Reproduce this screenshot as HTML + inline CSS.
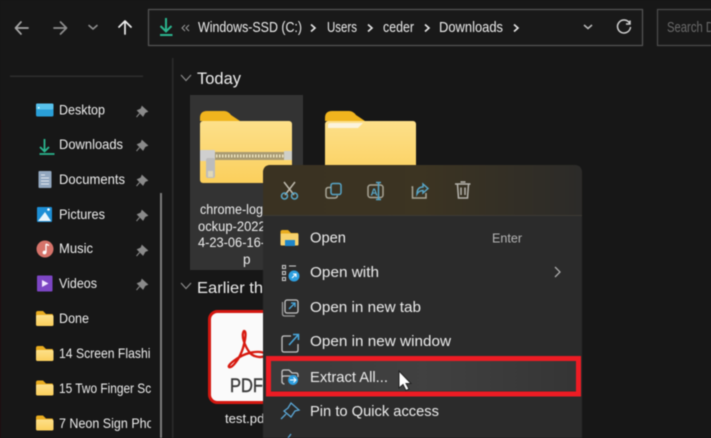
<!DOCTYPE html>
<html><head><meta charset="utf-8"><style>
html,body{margin:0;padding:0;background:#171717;width:711px;height:438px;overflow:hidden}
svg{display:block;filter:blur(.5px)}
text{font-family:"Liberation Sans",sans-serif;fill:#ececec;font-size:14px}
</style></head><body>
<svg width="711" height="438" viewBox="0 0 711 438" xmlns="http://www.w3.org/2000/svg">
<defs>
<clipPath id="sb"><rect x="0" y="0" width="151" height="438"/></clipPath>
<linearGradient id="fy" x1="0" y1="0" x2="0" y2="1"><stop offset="0" stop-color="#fde08a"/><stop offset="1" stop-color="#fbcf5c"/></linearGradient>
<linearGradient id="tb" x1="0" y1="0" x2="1" y2="0"><stop offset="0" stop-color="#3a3222"/><stop offset=".5" stop-color="#3c3422"/><stop offset="1" stop-color="#2c2b29"/></linearGradient>
<linearGradient id="ex" x1="0" y1="0" x2="1" y2="0"><stop offset="0" stop-color="#3a3a3a"/><stop offset=".5" stop-color="#414141"/><stop offset="1" stop-color="#353535"/></linearGradient>
<g id="pin"><path d="M4 0.5 L9.5 5.5 L7 6.5 L5 10 L-.5 4.5 L3 3 Z M1.5 7.5 L-1.5 11" fill="#8a8a8a" stroke="#8a8a8a" stroke-width="1"/></g>
<g id="fold"><path d="M0 2 Q0 0 2 0 H7 L10 3 H16 Q17 3 17 4 V8 H0Z" fill="#e9ac1f"/><rect x="0" y="4" width="17.500" height="11" rx="1.500" fill="url(#fy)"/></g>
</defs>
<rect width="711" height="438" fill="#171717"/>
<rect x="0" y="120" width="1" height="318" fill="#210d10"/>

<!-- nav -->
<g fill="none" stroke-linecap="round" stroke-linejoin="round">
<path d="M28 28H16M21 22L15.500 28L21 34" stroke="#a5a5a5" stroke-width="1.700"/>
<path d="M54 28H66M60.500 22L66.500 28L60.500 34" stroke="#8e8e8e" stroke-width="1.700"/>
<path d="M89 25.500L93 29L97 25.500" stroke="#8e8e8e" stroke-width="1.600"/>
<path d="M125 34V21M119 27L125 21L131 27" stroke="#ededed" stroke-width="1.700"/>
</g>
<rect x="148.500" y="9.500" width="494" height="36" fill="#191919" stroke="#555" stroke-width="1.200"/>
<rect x="657.500" y="9.500" width="70" height="36" fill="#191919" stroke="#4d4d4d" stroke-width="1.200"/>
<path d="M166 18V31M160.500 26L166 31.500L171.500 26M160 35H172.500" fill="none" stroke="#2bb58e" stroke-width="2"/>
<path d="M185 25L182 28L185 31M189 25L186 28L189 31" fill="none" stroke="#999" stroke-width="1"/>
<g>
<text x="198" y="32" style="font-size:15px" textLength="104" lengthAdjust="spacingAndGlyphs">Windows-SSD (C:)</text>
<text x="327" y="32" style="font-size:15px" textLength="30" lengthAdjust="spacingAndGlyphs">Users</text>
<text x="383" y="32" style="font-size:15px" textLength="31" lengthAdjust="spacingAndGlyphs">ceder</text>
<text x="439" y="32" style="font-size:15px" textLength="64" lengthAdjust="spacingAndGlyphs">Downloads</text>
<text x="667" y="32" style="font-size:15px;fill:#6a6a6a" textLength="47" lengthAdjust="spacingAndGlyphs">Search D</text>
</g>
<g fill="none" stroke="#e6e6e6" stroke-width="1.600">
<path d="M311 24.500L315 28L311 31.500M368 24.500L372 28L368 31.500M425 24.500L429 28L425 31.500M514 24.500L518 28L514 31.500"/>
</g>
<path d="M584 25L588 28.500L592 25" fill="none" stroke="#bbb" stroke-width="1.500"/>
<path d="M629.500 23A6.500 6.500 0 1 0 630.500 27M630 20.500V24H626" fill="none" stroke="#d0d0d0" stroke-width="1.500"/>

<!-- sidebar -->
<rect x="10" y="75.500" width="133" height="1.500" fill="#2e2e2e"/>
<rect x="172" y="58" width="1.500" height="380" fill="#2b2b2b"/>
<rect x="160" y="193" width="2" height="245" fill="#7a7a7a"/>

<rect x="36" y="103.500" width="17.500" height="13" rx="1.500" fill="#2a9fd8"/>
<rect x="36" y="103.500" width="17.500" height="6" rx="1.500" fill="#58c2ec"/>
<rect x="38" y="107" width="1.500" height="1.500" fill="#dff"/>
<path d="M41 140V152M36.500 148L41 152.500L45.500 148M36 155H51" transform="translate(3.500,-1)" fill="none" stroke="#2bb58e" stroke-width="1.800"/>
<rect x="38.500" y="171" width="13" height="17" rx="1" fill="#93a8c0"/>
<path d="M41 175H45M41 178H49M41 181H49M41 184H49" stroke="#dfe6ee" stroke-width="1"/>
<rect x="37" y="207" width="15" height="15" rx="1" fill="#1d8fd6"/>
<path d="M38 221L45 212L51 221Z" fill="#e8f5fc"/><circle cx="48.500" cy="209.500" r="1.300" fill="#fff"/>
<circle cx="45" cy="249" r="8.500" fill="#d6736a"/>
<path d="M46 244V252.500" stroke="#fff" stroke-width="1.300"/><circle cx="44.500" cy="252.500" r="1.900" fill="#fff"/><path d="M46 244L49 245.500" stroke="#fff" stroke-width="1.300"/>
<rect x="37" y="275.500" width="15.500" height="16" rx="1" fill="#7d46c4"/>
<path d="M42 280V287L48.500 283.500Z" fill="#f2e8ff"/>
<use href="#fold" x="36" y="311"/><use href="#fold" x="36" y="346"/><use href="#fold" x="36" y="380.500"/><use href="#fold" x="36" y="415.500"/>
<use href="#pin" x="138" y="106"/><use href="#pin" x="138" y="140"/><use href="#pin" x="138" y="175"/><use href="#pin" x="138" y="210"/><use href="#pin" x="138" y="245"/><use href="#pin" x="138" y="279"/>
<g clip-path="url(#sb)">
<text x="59" y="114.500" textLength="46" lengthAdjust="spacingAndGlyphs">Desktop</text>
<text x="59" y="149" textLength="64" lengthAdjust="spacingAndGlyphs">Downloads</text>
<text x="59" y="184" textLength="66" lengthAdjust="spacingAndGlyphs">Documents</text>
<text x="59" y="219" textLength="46" lengthAdjust="spacingAndGlyphs">Pictures</text>
<text x="59" y="253" textLength="34" lengthAdjust="spacingAndGlyphs">Music</text>
<text x="59" y="288" textLength="38" lengthAdjust="spacingAndGlyphs">Videos</text>
<text x="59" y="323" textLength="30" lengthAdjust="spacingAndGlyphs">Done</text>
<text x="59" y="358" textLength="105" lengthAdjust="spacingAndGlyphs">14 Screen Flashing</text>
<text x="59" y="393" textLength="108" lengthAdjust="spacingAndGlyphs">15 Two Finger Scroll</text>
<text x="59" y="428" textLength="105" lengthAdjust="spacingAndGlyphs">7 Neon Sign Photo</text>
</g>

<!-- main -->
<path d="M181 75L186 80.500L191 75" fill="none" stroke="#8a8a8a" stroke-width="1.200"/>
<text x="197" y="84" style="font-size:17px" textLength="44" lengthAdjust="spacingAndGlyphs">Today</text>
<rect x="190" y="95" width="113" height="175" fill="#333"/>
<!-- zip folder -->
<path d="M200 118Q200 111 207 111H224Q228 111 231 115L240 121H200Z" fill="#f0b41e"/>
<rect x="200" y="121" width="92" height="62" rx="3" fill="url(#fy)"/>
<rect x="214" y="152" width="72" height="8" fill="#a89a72"/>
<path d="M216 156H286" stroke="#ece3c0" stroke-width="3" stroke-dasharray="1.500 1.500"/>
<rect x="200" y="150" width="15" height="11" rx="1" fill="#cfcfcf"/>
<rect x="284" y="151" width="8" height="9" fill="#cfcfc8"/>
<rect x="206" y="158" width="9" height="20" rx="2" fill="#bcbcbc"/>
<rect x="208" y="171" width="5" height="6" fill="#e0d8b8"/>
<!-- plain folder -->
<path d="M325 118Q325 111 332 111H349Q353 111 356 115L365 121H325Z" fill="#f0b41e"/>
<rect x="325" y="121" width="91" height="60" rx="3" fill="url(#fy)"/>
<path d="M328 125Q328 123 331 123H363L358 128H328Z" fill="#fbf3dc"/>
<g>
<text x="200" y="214" style="font-size:13.500px" textLength="70" lengthAdjust="spacingAndGlyphs">chrome-logo</text>
<text x="198" y="231" style="font-size:13.500px" textLength="72" lengthAdjust="spacingAndGlyphs">ockup-2022-</text>
<text x="198" y="247" style="font-size:13.500px" textLength="67" lengthAdjust="spacingAndGlyphs">4-23-06-16-</text>
<text x="243" y="264" style="font-size:13.500px">p</text>
</g>
<path d="M181 283L186 288.500L191 283" fill="none" stroke="#8a8a8a" stroke-width="1.200"/>
<text x="197" y="293" style="font-size:16px" textLength="78" lengthAdjust="spacingAndGlyphs">Earlier this</text>
<!-- pdf -->
<rect x="209.500" y="311.500" width="72" height="91" rx="8" fill="#fafafa" stroke="#d31710" stroke-width="3"/>
<path d="M244 331C241 335 244 345 250 353C255 358 264 358 265 355C265 351 254 351 246 354C238 357 227 365 229 367C232 369 240 358 243 348C245 341 247 331 244 331Z" fill="none" stroke="#d71a10" stroke-width="2.300"/>
<text x="230" y="392" style="font-size:19px;fill:#3a3a3a;stroke:#3a3a3a;stroke-width:.4" textLength="33" lengthAdjust="spacingAndGlyphs">PDF</text>
<text x="225" y="423" style="font-size:13px" textLength="43" lengthAdjust="spacingAndGlyphs">test.pdf</text>

<!-- context menu -->
<path d="M263 448V173Q263 165 271 165H574Q582 165 582 173V448Z" fill="#2b2b2b"/>
<path d="M263 215V173Q263 165 271 165H574Q582 165 582 173V215Z" fill="url(#tb)"/>
<rect x="263" y="215" width="319" height="1" fill="#3d3a34"/>
<!-- toolbar icons -->
<g fill="none" stroke-width="1.500">
<path d="M284 182L294 195M295 182L285 195" stroke="#bdb9ad"/>
<circle cx="284.500" cy="196" r="3" stroke="#57a5c7"/><circle cx="294.500" cy="196" r="3" stroke="#57a5c7"/>
<rect x="331" y="183.500" width="10" height="11" rx="2" stroke="#57a5c7"/>
<path d="M331 187.500H328.500Q326 187.500 326 190V195Q326 198 328.500 198H335Q337 198 337.500 195.500" stroke="#a8a596"/>
<rect x="368" y="185" width="15" height="12.500" rx="2.500" stroke="#a8a596"/>
<path d="M378.500 182.500V199.500M376 182.500H381M376 199.500H381" stroke="#57a5c7"/>
<path d="M411.500 187H412.500V198H426V193" stroke="#a8a596"/>
<path d="M417 194Q417 187 423 187V184L428 188.500L423 193V190.500Q419 190.500 417 194Z" stroke="#57a5c7"/>
<path d="M455.500 184H471M458 184.500L459 198H468L469 184.500M461 182H466M461.500 187.500V195M465.500 187.500V195" stroke="#b5b3ac" transform="translate(-.5,0)"/>
</g>
<text x="370.500" y="195.500" style="font-size:10px;fill:#57a5c7;font-weight:700">A</text>
<!-- menu text -->
<g>
<text x="310" y="242.500" style="font-size:15px" textLength="36" lengthAdjust="spacingAndGlyphs">Open</text>
<text x="492" y="242.500" textLength="30" lengthAdjust="spacingAndGlyphs" style="font-size:13px;fill:#b5b5b5">Enter</text>
<text x="310" y="277" style="font-size:15px" textLength="69" lengthAdjust="spacingAndGlyphs">Open with</text>
<text x="310" y="312" style="font-size:15px" textLength="111" lengthAdjust="spacingAndGlyphs">Open in new tab</text>
<text x="310" y="346" style="font-size:15px" textLength="141" lengthAdjust="spacingAndGlyphs">Open in new window</text>
<text x="310" y="416" style="font-size:15px" textLength="129" lengthAdjust="spacingAndGlyphs">Pin to Quick access</text>
</g>
<path d="M555 267L560 272L555 277" fill="none" stroke="#aaa" stroke-width="1.300"/>
<!-- open icon -->
<path d="M280.500 232Q280.500 230 282.500 230H288L291 233H298V236H280.500Z" fill="#e9ac1f"/>
<rect x="280.500" y="233.500" width="18" height="12" rx="1" fill="#f7d26d"/>
<rect x="285" y="240" width="10" height="6" fill="#1f86c9"/>
<!-- open with icon -->
<g fill="none" stroke="#c9c9c9" stroke-width="1.100">
<rect x="282.500" y="265.500" width="3" height="3"/><rect x="282.500" y="271.500" width="3" height="3"/><rect x="282.500" y="277.500" width="3" height="3"/>
<path d="M289 266H296"/>
</g>
<circle cx="294" cy="276" r="5.500" fill="#2d9fe0"/>
<path d="M292 278L296 274M293 274H296V277" stroke="#fff" stroke-width="1.100" fill="none"/>
<!-- new tab / window / pin -->
<g fill="none" stroke-width="1.300">
<rect x="285" y="300" width="13" height="13" rx="2" stroke="#c5c5c5"/>
<path d="M282.500 302V314Q282.500 316 285 316H295" stroke="#9a9a9a"/>
<path d="M289 309L295 303M291 303H295V307" stroke="#4aa8dd"/>
<path d="M291 336H284Q282 336 282 338V350Q282 352 284 352H296Q298 352 298 350V344" stroke="#c5c5c5"/>
<path d="M289 345L298 335M293 334.500H298.500V340" stroke="#4aa8dd" stroke-width="1.500"/>
<path d="M291 403L299 410L295 411L291 417L284 411L288 408ZM286 414L281 419" stroke="#5aa5d4" stroke-width="1.300"/>
</g>
<!-- extract row -->
<rect x="271" y="361" width="305" height="30" fill="url(#ex)"/>
<path d="M282 383V372Q282 370 284 370H289L292 373H296Q298 373 298 375V377M284.500 384Q282 384 282 381V378Q282 376 284 376H296" stroke="#c5c5c5" stroke-width="1.300" fill="none"/>
<circle cx="293" cy="380" r="5" fill="#2d9fe0"/>
<path d="M290 380H296M293.500 377.500L296 380L293.500 382.500" stroke="#fff" stroke-width="1" fill="none"/>
<text x="310" y="382" style="font-size:15px" textLength="78" lengthAdjust="spacingAndGlyphs">Extract All...</text>
<rect x="268.500" y="358.500" width="310" height="35.500" fill="none" stroke="#ed1c24" stroke-width="5"/>
<!-- cursor -->
<path d="M399 371V388L403 384.500L406 390.500L409 389L406 383.500H411Z" fill="#fff" stroke="#222" stroke-width="1"/>
<path d="M291 434L288 438" stroke="#5aa5d4" stroke-width="1.300"/>
</svg>
</body></html>
